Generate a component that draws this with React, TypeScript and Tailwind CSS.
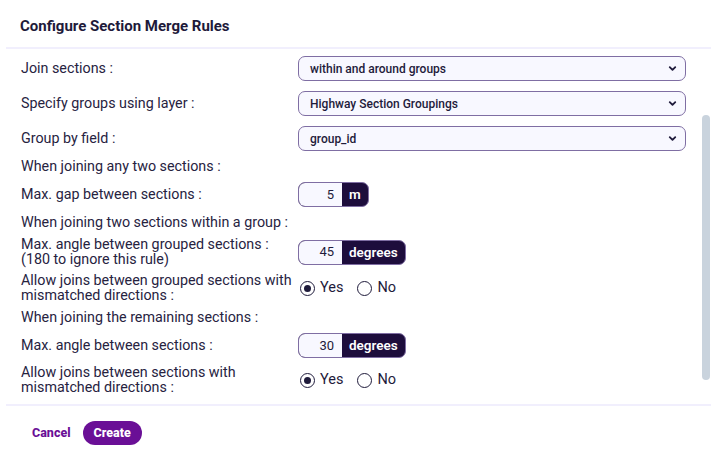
import { ChevronDown } from "lucide-react"

const font = { fontFamily: "Roboto, 'Noto Sans', sans-serif" }

function SelectBox({ value }: { value: string }) {
  return (
    <button className="flex h-[25px] w-[388px] items-center justify-between rounded-[7px] border border-[#7f6ea3] bg-[#f8f8ff] pl-[11px] pr-[7px] text-[12px] font-medium text-[#1f1b3b]">
      <span>{value}</span>
      <ChevronDown className="h-[11px] w-[11px] text-[#1f1b3b]" strokeWidth={4} />
    </button>
  )
}

function UnitInput({ value, unit }: { value: string; unit: string }) {
  return (
    <div className="flex h-[25px] overflow-hidden rounded-[7px] border border-[#7f6ea3] bg-[#1d0d3c]">
      <div className="flex w-[43px] items-center justify-end bg-[#f8f8ff] pr-[8px] text-[13px] text-[#1f1b3b]">{value}</div>
      <div className="flex items-center px-[7px] text-[13.5px] font-semibold text-white">{unit}</div>
    </div>
  )
}

function Radio({ label, checked }: { label: string; checked?: boolean }) {
  return (
    <label className="flex items-center gap-[5px] text-[14.5px] text-[#1f1b3b]">
      <span className="flex h-[15px] w-[15px] items-center justify-center rounded-full border-[1.5px] border-[#1f1b3b]">
        {checked && <span className="h-[7px] w-[7px] rounded-full bg-[#1f1b3b]" />}
      </span>
      {label}
    </label>
  )
}

function Row({ label, children, className }: { label: React.ReactNode; children?: React.ReactNode; className: string }) {
  return (
    <div className={`flex items-center ${className}`}>
      <div className="w-[277px] whitespace-nowrap text-[14.3px] leading-[15px] text-[#27233f]">{label}</div>
      {children}
    </div>
  )
}

function RadioPair() {
  return (
    <div className="flex gap-[14px] pl-[2px]">
      <Radio label="Yes" checked />
      <Radio label="No" />
    </div>
  )
}

export default function App() {
  return (
    <div className="h-[466px] w-[717px] bg-white px-[6px]" style={font}>
      {/* Header */}
      <div className="border-b-2 border-[#f1effd] pb-[12px] pl-[14px] pt-[18px]">
        <h1 className="text-[15px] font-bold leading-[17px] text-[#1e1a3a]">Configure Section Merge Rules</h1>
      </div>

      {/* Body */}
      <div className="flex h-[357px] border-b-2 border-[#f1effd]">
        <div className="flex flex-1 flex-col pl-[15px]">
          <Row label="Join sections :" className="mt-[7px] h-[25px]">
            <SelectBox value="within and around groups" />
          </Row>
          <Row label="Specify groups using layer :" className="mt-[10px] h-[25px]">
            <SelectBox value="Highway Section Groupings" />
          </Row>
          <Row label="Group by field :" className="mt-[10px] h-[25px]">
            <SelectBox value="group_id" />
          </Row>
          <Row label="When joining any two sections :" className="mt-[5px] h-[20px]" />
          <Row label="Max. gap between sections :" className="mt-[6px] h-[25px]">
            <UnitInput value="5" unit="m" />
          </Row>
          <Row label="When joining two sections within a group :" className="mt-[5px] h-[20px]" />
          <Row
            label={
              <>
                Max. angle between grouped sections :<br />
                (180 to ignore this rule)
              </>
            }
            className="mt-[5px] h-[30px]"
          >
            <UnitInput value="45" unit="degrees" />
          </Row>
          <Row
            label={
              <>
                Allow joins between grouped sections with
                <br />
                mismatched directions :
              </>
            }
            className="mt-[6px] h-[30px]"
          >
            <RadioPair />
          </Row>
          <Row label="When joining the remaining sections :" className="mt-[4px] h-[20px]" />
          <Row label="Max. angle between sections :" className="mt-[6px] h-[25px]">
            <UnitInput value="30" unit="degrees" />
          </Row>
          <Row
            label={
              <>
                Allow joins between sections with
                <br />
                mismatched directions :
              </>
            }
            className="mt-[7px] h-[30px]"
          >
            <RadioPair />
          </Row>
        </div>

        {/* Scrollbar */}
        <div className="mr-[1px] w-[8px] pt-[66px]">
          <div className="h-[265px] rounded-full bg-[#c9d3dd]" />
        </div>
      </div>

      {/* Footer */}
      <div className="flex items-center gap-[12px] pl-[26px] pt-[15px]">
        <button className="text-[12.5px] font-extrabold text-[#6a0f96]">Cancel</button>
        <button className="h-[24px] rounded-full bg-[#6a0f96] px-[11px] text-[12.5px] font-extrabold text-white">Create</button>
      </div>
    </div>
  )
}
